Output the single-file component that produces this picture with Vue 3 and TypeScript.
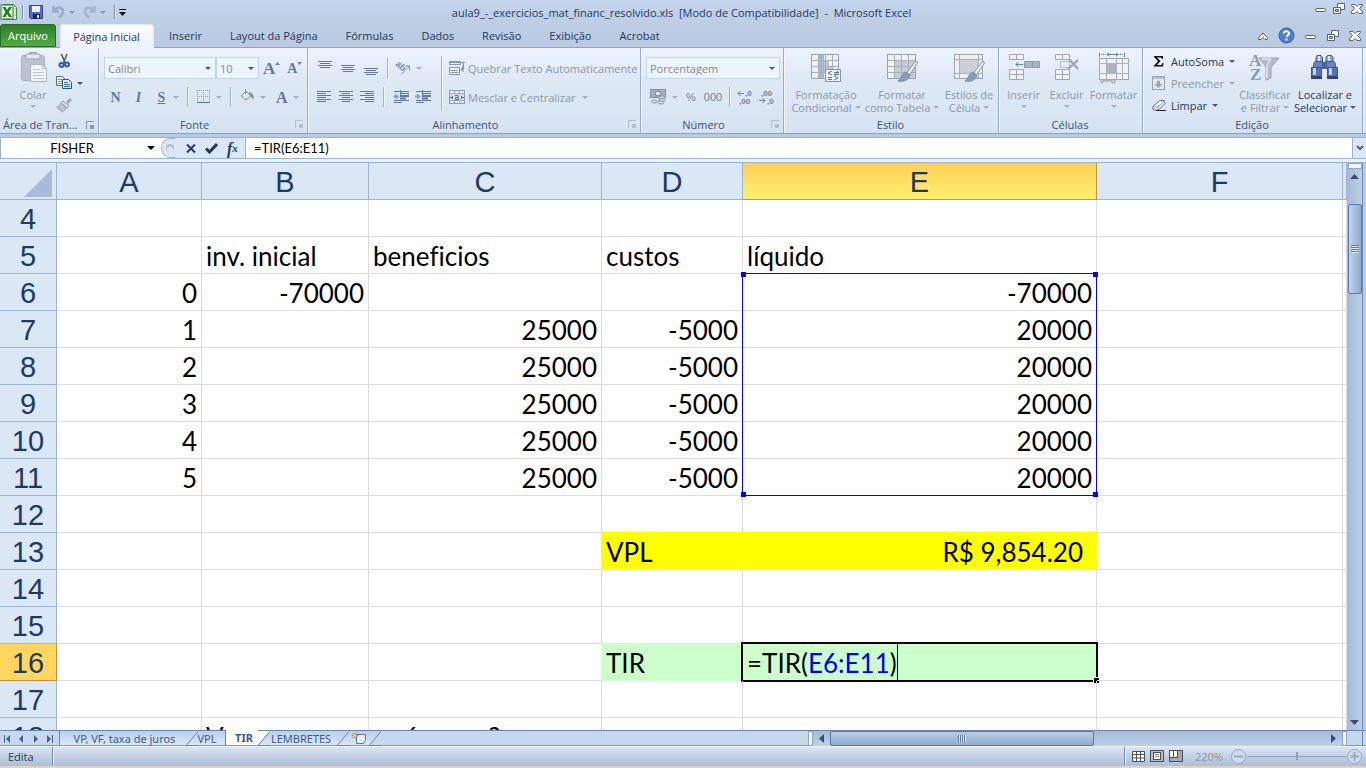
<script setup lang="ts">
import { ref } from 'vue'

type Cell = { t: string; a?: 'r' | 'l'; k?: string }
type Row = { n: number; cells: Record<string, Cell> }

const cols = ['A', 'B', 'C', 'D', 'E', 'F', '']
const ribbonTabs = ['Inserir', 'Layout da Página', 'Fórmulas', 'Dados', 'Revisão', 'Exibição', 'Acrobat']

const num = (t: string): Cell => ({ t, a: 'r' })
const txt = (t: string): Cell => ({ t, a: 'l' })

const flow = (n: number, year: string): Row => ({
  n,
  cells: { A: num(year), C: num('25000'), D: num('-5000'), E: num('20000') },
})

const rows: Row[] = [
  { n: 4, cells: {} },
  { n: 5, cells: { B: txt('inv. inicial'), C: txt('beneficios'), D: txt('custos'), E: txt('líquido') } },
  { n: 6, cells: { A: num('0'), B: num('-70000'), E: { t: '-70000', a: 'r', k: 'range' } } },
  flow(7, '1'),
  flow(8, '2'),
  flow(9, '3'),
  flow(10, '4'),
  flow(11, '5'),
  { n: 12, cells: {} },
  { n: 13, cells: { D: { t: 'VPL', a: 'l', k: 'yellow' }, E: { t: 'R$ 9,854.20', a: 'r', k: 'yellow money' } } },
  { n: 14, cells: {} },
  { n: 15, cells: {} },
  { n: 16, cells: { D: { t: 'TIR', a: 'l', k: 'green' }, E: { t: '', a: 'l', k: 'green editing' } } },
  { n: 17, cells: {} },
  { n: 18, cells: { B: { t: 'Vamos usar nos números?', a: 'l', k: 'spill' } } },
]

const nameBox = ref('FISHER')
const formula = ref('=TIR(E6:E11)')
const fontName = ref('Calibri')
const fontSize = ref('10')
const numberFormat = ref('Porcentagem')
const zoom = ref(50)
const alignTop = [2, 6, 9]
</script>

<template>
  <div class="window">
    <header class="titlebar">
      <div class="quick">
        <svg class="logo" width="18" height="18" viewBox="0 0 18 18">
          <path d="M3.500 1.500h10l3 3v12h-13z" fill="#fff" stroke="#3c8a3e" />
          <path d="M13 6h3M13 9h3M13 12h3" stroke="#7db77e" />
          <rect x="1" y="2" width="12" height="14" fill="#e3f1dc" stroke="#2f7d32" />
          <path d="M2.500 4h3L7 7l2-3h3L8.700 9l3.300 5H9l-2-3-1.500 3h-3L5.500 9z" fill="#1f7a2a" />
        </svg>
        <i class="qsep"></i>
        <button aria-label="Salvar">
          <svg width="14" height="14" viewBox="0 0 14 14">
            <path d="M.5.5h13v13h-12l-1-1z" fill="#5b67c9" stroke="#363f9b" />
            <rect x="3" y="1" width="8" height="6" fill="#eef2fb" />
            <rect x="4" y="9" width="7" height="5" fill="#20264f" />
            <rect x="8" y="10" width="2" height="3" fill="#e6eaf6" />
          </svg>
        </button>
        <button class="undo" aria-label="Desfazer">
          <svg width="13" height="14" viewBox="0 0 13 14">
            <path d="M1.500 1v5.500H7M2 6C4.500 2 10.500 1.500 11 6c.2 3-1.500 4.500-4 6.500" fill="none" stroke="#98abc7" stroke-width="2.500" />
          </svg>
          <i class="caret soft"></i>
        </button>
        <button class="redo" aria-label="Refazer">
          <svg width="13" height="14" viewBox="0 0 13 14">
            <path d="M11.500 1v5.500H6M11 6C8.500 2 2.500 1.500 2 6c-.2 3 1.500 4.500 4 6.500" fill="none" stroke="#a3b5cf" stroke-width="2.500" />
          </svg>
          <i class="caret soft"></i>
        </button>
        <i class="qsep"></i>
        <button class="customize" aria-label="Personalizar">
          <svg width="7" height="7" viewBox="0 0 7 7"><path d="M0 3h7L3.500 7z" fill="#111" /><path d="M0 .5h7" stroke="#111" /></svg>
        </button>
      </div>
      <h1>aula9_-_exercicios_mat_financ_resolvido.xls&nbsp; [Modo de Compatibilidade]&nbsp; -&nbsp; Microsoft Excel</h1>
      <div class="winbtns">
        <button aria-label="Minimizar"><svg width="12" height="12" viewBox="0 0 12 12"><rect x=".5" y="5.500" width="10" height="3" rx="1" fill="#fff" stroke="#5a6375" /></svg></button>
        <button aria-label="Restaurar"><svg width="12" height="12" viewBox="0 0 12 12"><g fill="#fff" stroke="#5a6375"><path d="M4.500.5h7v6h-7z" /><path d="M.5 4.500h7v6h-7z" /><path d="M2.500 6.500h3v2h-3z" fill="#b9cae2" /></g></svg></button>
        <button aria-label="Fechar"><svg width="12" height="12" viewBox="0 0 12 12"><path d="M.5 1.500h3.500l2 2 2-2h3.500v1L8.500 5.500l3 3v2H8l-2-2-2 2H.5v-2l3-3-3-3z" fill="#fff" stroke="#5a6375" /></svg></button>
      </div>
    </header>

    <nav class="tabs">
      <button class="file">Arquivo</button>
      <button class="tab active">Página Inicial</button>
      <button v-for="t in ribbonTabs" :key="t" class="tab">{{ t }}</button>
      <div class="docbtns">
        <button aria-label="Minimizar a Faixa de Opções"><svg width="10" height="10" viewBox="0 0 10 10"><path d="M.8 6.500 5 2l4.200 4.500v2H7L5 6.500 3 8.500H.8z" fill="#fff" stroke="#4d576c" /></svg></button>
        <button class="help" aria-label="Ajuda">
          <svg width="17" height="17" viewBox="0 0 17 17"><circle cx="8.500" cy="8.500" r="7.500" fill="#4a80d2" stroke="#2c5fae" /><path d="M5.800 6.500C6 3.500 11 3.500 11 6.300c0 2-2.400 2-2.400 4" fill="none" stroke="#fff" stroke-width="2" /><rect x="7.500" y="11.500" width="2" height="2" fill="#fff" /></svg>
        </button>
        <button aria-label="Minimizar janela"><svg width="12" height="12" viewBox="0 0 12 12"><rect x=".5" y="5.500" width="10" height="3" rx="1" fill="#fff" stroke="#5a6375" /></svg></button>
        <button aria-label="Restaurar janela"><svg width="12" height="12" viewBox="0 0 12 12"><g fill="#fff" stroke="#5a6375"><path d="M4.500.5h7v6h-7z" /><path d="M.5 4.500h7v6h-7z" /><path d="M2.500 6.500h3v2h-3z" fill="#b9cae2" /></g></svg></button>
        <button aria-label="Fechar janela"><svg width="12" height="12" viewBox="0 0 12 12"><path d="M.5 1.500h3.500l2 2 2-2h3.500v1L8.500 5.500l3 3v2H8l-2-2-2 2H.5v-2l3-3-3-3z" fill="#fff" stroke="#5a6375" /></svg></button>
      </div>
    </nav>

    <section class="ribbon">
      <div class="group g-clip">
        <div class="body">
          <button class="big off">
            <svg width="32" height="32" viewBox="0 0 32 32">
              <rect x="4.500" y="3.500" width="23" height="25" rx="2" fill="#bcc3cd" stroke="#a6afbc" />
              <rect x="9" y="2" width="14" height="5" rx="1" fill="#e3e8ee" stroke="#98a2b2" />
              <path d="M13 2a3 2 0 0 1 6 0" fill="none" stroke="#98a2b2" stroke-width="2" />
              <path d="M13.500 12.500h12l4 4v13h-16z" fill="#f3f6fa" stroke="#aab4c4" />
              <path d="M25.500 12.500v4h4M16 17.500h7M16 20.500h11M16 23.500h11M16 26.500h11" fill="none" stroke="#b9c3d2" />
            </svg>
            <span>Colar</span><i class="caret"></i>
          </button>
          <div class="stack">
            <button aria-label="Recortar">
              <svg width="16" height="16" viewBox="0 0 16 16"><path d="M5.500 1l3.500 9M11 1 7.500 10" stroke="#4c5569" stroke-width="1.500" /><g fill="none" stroke="#2f5fae" stroke-width="2"><circle cx="5.500" cy="12" r="2" /><circle cx="11" cy="11.500" r="2" /></g></svg>
            </button>
            <button aria-label="Copiar">
              <svg width="16" height="16" viewBox="0 0 16 16"><path d="M.5 1.500h6l2 2v7h-8z" fill="#fff" stroke="#4a6ca8" /><path d="M2 4.500h4M2 6.500h4M2 8.500h4" stroke="#7595cf" /><path d="M6.500 4.500h6l3 3v6h-9z" fill="#e6eefb" stroke="#2d509a" /><path d="M8 7.500h4M8 9.500h6M8 11.500h6" stroke="#3e69bb" /></svg>
              <i class="caret dark"></i>
            </button>
            <button aria-label="Pincel de Formatação">
              <svg width="16" height="16" viewBox="0 0 16 16"><path d="M10 5l4-4 2 2-4 4z" fill="#9aa3b1" /><path d="M7 4l6 5-2 2-6-5z" fill="#d8dce3" stroke="#9ba4b2" /><path d="M5 6l5.500 5-4 4L.5 10c2 0 3.500-1.500 4.500-4z" fill="#b4bbc6" stroke="#9da5b2" /><path d="M4 9l4 4" stroke="#e1e5ea" /></svg>
            </button>
          </div>
        </div>
        <footer><span>Área de Tran...</span><button class="launch live" aria-label="Mais opções"></button></footer>
      </div>

      <div class="group g-font">
        <div class="body col">
          <div class="line">
            <label class="combo w-font"><select v-model="fontName" aria-label="Fonte"><option>Calibri</option></select><i class="caret dark"></i></label>
            <label class="combo w-size"><select v-model="fontSize" aria-label="Tamanho da fonte"><option>10</option></select><i class="caret dark"></i></label>
            <button class="ser grow1" aria-label="Aumentar fonte"><b>A</b><svg width="5" height="3" viewBox="0 0 5 3"><path d="M0 3h5L2.500 0z" fill="#6d82a8" /></svg></button>
            <button class="ser grow2" aria-label="Reduzir fonte"><b>A</b><svg width="5" height="3" viewBox="0 0 5 3"><path d="M0 0h5L2.500 3z" fill="#6d82a8" /></svg></button>
          </div>
          <div class="line">
            <button class="ser c23"><b>N</b></button>
            <button class="ser c23"><b><em>I</em></b></button>
            <button class="ser c23"><b><u>S</u></b></button>
            <i class="caret"></i>
            <i class="sep"></i>
            <button class="pair" aria-label="Bordas"><svg width="15" height="14" viewBox="0 0 15 14"><path d="M1.500 0v12M7.500 0v12M13.500 0v12M1 .5h13M1 6.500h13" stroke="#8b9bb8" stroke-dasharray="1 1" /><path d="M1 12.500h13" stroke="#5a6f97" /></svg><i class="caret"></i></button>
            <i class="sep"></i>
            <button class="pair" aria-label="Cor de preenchimento"><svg width="16" height="16" viewBox="0 0 16 16"><path d="M2 7l5-5 5 5-5 4z" fill="#e7ebf2" stroke="#7e8ca8" /><path d="M6.500 0v5" stroke="#7e8ca8" /><path d="M10 3c4 1 5.500 4 4.500 8-1-2-2-3-4-4z" fill="#7d93bb" /><rect x="0" y="12" width="15" height="3" fill="#e4e2dc" /></svg><i class="caret"></i></button>
            <button class="pair ser fontcolor" aria-label="Cor da fonte"><b>A</b><i class="caret"></i></button>
          </div>
        </div>
        <footer><span>Fonte</span><button class="launch" aria-label="Mais opções"></button></footer>
      </div>

      <div class="group g-align">
        <div class="body">
          <div class="col">
            <div class="line">
              <button v-for="y in alignTop" :key="y" class="c23" aria-label="Alinhar vertical"><svg width="14" height="18" viewBox="0 0 14 18"><path :d="`M0 ${y}.5h14M2 ${y + 2}.5h10M0 ${y + 4}.5h14M2 ${y + 6}.5h10`" stroke="#60779f" /></svg></button>
              <i class="sep"></i>
              <button class="pair" aria-label="Orientação"><svg width="17" height="16" viewBox="0 0 17 16"><text x="1" y="7" transform="rotate(42 4 6)" font-family="Liberation Sans" font-size="9" font-weight="bold" fill="#7b8cab">ab</text><path d="M7 14.500 15 6.500M11 6h4.500v4.500" fill="none" stroke="#7b8cab" /></svg><i class="caret"></i></button>
            </div>
            <div class="line">
              <button class="c23" aria-label="Esquerda"><svg width="14" height="14" viewBox="0 0 14 14"><path d="M0 1.500h14M0 3.500h9M0 5.500h14M0 7.500h9M0 9.500h14M0 11.500h9" stroke="#60779f" /></svg></button>
              <button class="c23" aria-label="Centro"><svg width="14" height="14" viewBox="0 0 14 14"><path d="M0 1.500h14M3 3.500h8M0 5.500h14M3 7.500h8M0 9.500h14M3 11.500h8" stroke="#60779f" /></svg></button>
              <button class="c23" aria-label="Direita"><svg width="14" height="14" viewBox="0 0 14 14"><path d="M0 1.500h14M5 3.500h9M0 5.500h14M5 7.500h9M0 9.500h14M5 11.500h9" stroke="#60779f" /></svg></button>
              <i class="sep"></i>
              <button class="c23" aria-label="Diminuir recuo"><svg width="16" height="14" viewBox="0 0 16 14"><path d="M1 1.500h15M7 3.500h9M1 10.500h15M1 12.500h8" stroke="#60779f" /><path d="M7 6h9M7 8.500h6" stroke="#60779f" stroke-width="2" /><path d="M0 6.500l4-3v2h2v2H4v2z" fill="#8da0c0" /><path d="M7.500 0v14" stroke="#60779f" stroke-dasharray="1 1" /></svg></button>
              <button class="c23" aria-label="Aumentar recuo"><svg width="16" height="14" viewBox="0 0 16 14"><path d="M1 1.500h15M7 3.500h9M1 10.500h15M1 12.500h8" stroke="#60779f" /><path d="M7 6h9M7 8.500h6" stroke="#60779f" stroke-width="2" /><path d="M6 6.500l-4-3v2H0v2h2v2z" fill="#8da0c0" /><path d="M7.500 0v14" stroke="#60779f" stroke-dasharray="1 1" /></svg></button>
            </div>
          </div>
          <i class="sep tall"></i>
          <div class="col start">
            <button class="line text off"><svg width="16" height="16" viewBox="0 0 16 16"><path d="M.5 1.500h11v3H.5zM.5 7.500h10v7H.5z" fill="#eef2f8" stroke="#8694ae" /><path d="M0 2.500h16M2 10.500h7M2 12.500h7" stroke="#8694ae" /><path d="M14.500 3v6h-2M12 9.500l2-2v4z" fill="#8694ae" stroke="#8694ae" /></svg><span>Quebrar Texto Automaticamente</span></button>
            <button class="line text off"><svg width="16" height="16" viewBox="0 0 16 16"><rect x=".5" y="1.500" width="15" height="13" fill="#e9eef5" stroke="#8f9bb1" /><path d="M0 4.500h16M0 11.500h16M5.500 1v3M10.500 1v3M5.500 12v3M10.500 12v3" stroke="#9fabc0" /><rect x="1" y="5" width="14" height="6" fill="#d5dde9" /><path d="M1 8.500h3M12 8.500h3M3.500 7v3M12.500 7v3" stroke="#5d6c88" /><path d="M6 6.500h3v4M9 8.500H6.500v2H10" fill="none" stroke="#5d6c88" /></svg><span>Mesclar e Centralizar</span><i class="caret"></i></button>
          </div>
        </div>
        <footer><span>Alinhamento</span><button class="launch" aria-label="Mais opções"></button></footer>
      </div>

      <div class="group g-num">
        <div class="body col">
          <div class="line">
            <label class="combo w-num"><select v-model="numberFormat" aria-label="Formato de número"><option>Porcentagem</option></select><i class="caret dark"></i></label>
          </div>
          <div class="line numrow">
            <button class="pair" aria-label="Moeda"><svg width="17" height="16" viewBox="0 0 17 16"><rect x=".5" y=".5" width="15" height="8" fill="#a5afbf" stroke="#8590a5" /><ellipse cx="8" cy="4.500" rx="3" ry="2.500" fill="#dfe4ec" stroke="#75819a" /><g fill="#d8dde6" stroke="#8b95a8"><ellipse cx="12" cy="8.500" rx="3" ry="1.500" /><ellipse cx="12" cy="11" rx="3" ry="1.500" /><ellipse cx="11" cy="13.500" rx="3" ry="1.500" /><ellipse cx="4.500" cy="12.500" rx="3" ry="1.500" /></g></svg><i class="caret"></i></button>
            <button class="pct">%</button>
            <button class="pct">000</button>
            <i class="sep"></i>
            <button class="dec" aria-label="Aumentar casas decimais"><svg width="16" height="16" viewBox="0 0 16 16"><text x="8" y="7" font-family="Liberation Sans" font-size="8" font-weight="bold" fill="#71809d">,0</text><text x="2" y="15" font-family="Liberation Sans" font-size="8" font-weight="bold" fill="#71809d">,00</text><path d="M1 4.500h6M3.500 2 1 4.500 3.500 7" fill="none" stroke="#71809d" /></svg></button>
            <button class="dec" aria-label="Diminuir casas decimais"><svg width="16" height="16" viewBox="0 0 16 16"><text x="2" y="7" font-family="Liberation Sans" font-size="8" font-weight="bold" fill="#71809d">,00</text><text x="8" y="15" font-family="Liberation Sans" font-size="8" font-weight="bold" fill="#71809d">,0</text><path d="M0 11.500h6M3.500 9 6 11.500 3.500 14" fill="none" stroke="#71809d" /></svg></button>
          </div>
        </div>
        <footer><span>Número</span><button class="launch" aria-label="Mais opções"></button></footer>
      </div>

      <div class="group g-style">
        <div class="body">
          <button class="big off w76">
            <svg width="32" height="32" viewBox="0 0 32 32"><rect x="1.500" y="2.500" width="27" height="24" fill="#f0f0ee" stroke="#98a2b2" /><path d="M8 3h6v23H8z" fill="#a9b6ca" /><path d="M14 9h5v6h-5zM14 15h8v6h-8z" fill="#b8c3d4" /><path d="M8.500 3v23M15.500 3v23M22.500 3v23M2 8.500h26M2 14.500h26M2 20.500h26" stroke="#a8b0bd" /><rect x="15.500" y="17.500" width="15" height="12" fill="#eef3fa" stroke="#8493b0" /><path d="M22 19l-4 2 4 2M18 25.500h4M18 27.500h4M24 20.500h5M24 22.500h5M28 18.500l-3 5M24 24l4 2-4 2" fill="none" stroke="#5d7199" /></svg>
            <span>Formatação<br />Condicional<i class="caret"></i></span>
          </button>
          <button class="big off w76">
            <svg width="32" height="32" viewBox="0 0 32 32"><rect x="1.500" y="2.500" width="28" height="24" fill="#f0f0ee" stroke="#98a2b2" /><path d="M9 9h20v17H9z" fill="#c4ccd9" /><path d="M8.500 3v23M15.500 3v23M22.500 3v23M2 8.500h27M2 14.500h27M2 20.500h27" stroke="#a8b0bd" /><path d="M30 9l1.500 2-8 12-3-2z" fill="#eceef1" stroke="#8d97a8" /><path d="M20 20l4 3c-1 5-6 7-12 6 3-1 3-7 8-9z" fill="#8d9cb6" stroke="#7a8aa6" /></svg>
            <span>Formatar<br />como Tabela<i class="caret"></i></span>
          </button>
          <button class="big off w58">
            <svg width="32" height="32" viewBox="0 0 32 32"><rect x="1.500" y="2.500" width="28" height="24" fill="#f0f0ee" stroke="#98a2b2" /><path d="M6.500 3v23M25.500 3v23M2 7.500h27M2 21.500h27" stroke="#a8b0bd" /><path d="M7 8h18v13H7z" fill="#c8d0dc" /><path d="M30 9l1.500 2-8 12-3-2z" fill="#eceef1" stroke="#8d97a8" /><path d="M20 20l4 3c-1 5-6 7-12 6 3-1 3-7 8-9z" fill="#8d9cb6" stroke="#7a8aa6" /></svg>
            <span>Estilos de<br />Célula<i class="caret"></i></span>
          </button>
        </div>
        <footer><span>Estilo</span></footer>
      </div>

      <div class="group g-cells">
        <div class="body">
          <button class="big off w43">
            <svg width="32" height="32" viewBox="0 0 32 32"><g fill="#f2f2f0" stroke="#a0a8b5"><path d="M1.500 2.500h14v5h-14zM1.500 17.500h14v10h-14z" /><path d="M8.500 2.500v5M8.500 17.500v10M1.500 22.500h14" /></g><path d="M16.500 9.500h15v6h-15z" fill="#aab5c5" stroke="#8e9aad" /><path d="M24.500 9.500v6" stroke="#8e9aad" /><path d="M8 12.500h7M10.500 10 8 12.500l2.500 2.500" fill="none" stroke="#71809d" /></svg>
            <span>Inserir</span><i class="caret"></i>
          </button>
          <button class="big off w43">
            <svg width="32" height="32" viewBox="0 0 32 32"><g fill="#f2f2f0" stroke="#a0a8b5"><path d="M4.500 2.500h14v5h-14zM4.500 17.500h14v10h-14z" /><path d="M11.500 2.500v5M11.500 17.500v10M4.500 22.500h14" /></g><path d="M9.500 9.500h9v6h-9z" fill="none" stroke="#8091b5" stroke-dasharray="1 1" /><path d="M18 7l9 10M27 8l-10 9" stroke="#98a2b2" stroke-width="2" /></svg>
            <span>Excluir</span><i class="caret"></i>
          </button>
          <button class="big off w51">
            <svg width="32" height="32" viewBox="0 0 32 32"><rect x="1.500" y="6.500" width="29" height="21" fill="#f2f2f0" stroke="#a0a8b5" /><path d="M8.500 6v22M18.500 6v22M24.500 6v22M1 11.500h30M1 21.500h30" stroke="#a8b0bd" /><path d="M9 11h10v11H9z" fill="#aab5c5" /><path d="M3 28h14v3h-3v-2H5v2H3z" fill="#dfe4ec" stroke="#a0a8b5" /><path d="M1.500 1v4M26.500 1v4" stroke="#71809d" /><path d="M3 2.500h6M20 2.500h6" stroke="#71809d" stroke-dasharray="1 1" /><path d="M9 2.500h11M11 1 9 2.500 11 4M18 1l2 1.500L18 4" fill="none" stroke="#71809d" /></svg>
            <span>Formatar</span><i class="caret"></i>
          </button>
        </div>
        <footer><span>Células</span></footer>
      </div>

      <div class="group g-edit">
        <div class="body">
          <div class="stack wide">
            <button><svg width="14" height="16" viewBox="0 0 14 16"><path d="M2 3h9v3h-1L9 4.500H5L8.500 8 5 12h4.500L10.500 10h1L11 13.500H2V12.500L6 8.300 2 4z" fill="#111" /></svg><span>AutoSoma</span><i class="caret dark"></i></button>
            <button class="off"><svg width="14" height="16" viewBox="0 0 14 16"><rect x=".5" y="1.500" width="12" height="13" fill="#e3e8ef" stroke="#98a2b2" /><path d="M1 2h11v2H1z" fill="#b9c1cd" /><path d="M5 6h3v3h2.500L6.500 13 2.500 9H5z" fill="#94a1b6" /></svg><span>Preencher</span><i class="caret"></i></button>
            <button><svg width="14" height="16" viewBox="0 0 14 16"><path d="M.5 10 7.500 3.500H12l1 3-6.500 6.500H1.500z" fill="#f4f7fc" stroke="#5a6b90" /><path d="M1 10h5l7-6.500M6 10v3" fill="none" stroke="#8b9ab8" /><path d="M4 13.500h10" stroke="#222" /></svg><span>Limpar</span><i class="caret dark"></i></button>
          </div>
          <button class="big off w60">
            <svg width="32" height="32" viewBox="0 0 32 32"><text x="0" y="14" font-family="Liberation Serif" font-size="17" font-weight="bold" fill="#8b99b3">A</text><text x="1" y="28" font-family="Liberation Serif" font-size="17" font-weight="bold" fill="#8b99b3">Z</text><path d="M10 6h20l-8 9v11l-5 2V15z" fill="#b4bcc8" stroke="#98a2b2" /><path d="M13 7h8l-3 8v11" fill="none" stroke="#d9dee6" stroke-width="2" /></svg>
            <span>Classificar<br />e Filtrar<i class="caret"></i></span>
          </button>
          <button class="big w60">
            <svg width="32" height="32" viewBox="0 0 32 32"><g stroke="#3f568a"><path d="M8 3.500h4l1.500 2V10H7V5.500zM18.500 3.500h4l1.500 2V10h-7V5.500z" fill="#8ea6d6" /><path d="M6 9.500h8V16H4l1-5zM17 9.500h8l1 1.500 1 5H17z" fill="#6a85c0" /><path d="M2.500 15.500h10v11h-10zM18.500 15.500h10v11h-10z" fill="#5671b0" /></g><path d="M13 10h5v7h-5z" fill="#4a62a0" /><path d="M4 16h3v7H4zM20 16h3v7h-3z" fill="#c5d3ee" /><path d="M9 4h2v5H9zM19 4h2v5h-2z" fill="#dbe5f6" /><path d="M2 24h11v3H2zM18 24h11v3H18z" fill="#32457a" /></svg>
            <span>Localizar e<br />Selecionar<i class="caret dark"></i></span>
          </button>
        </div>
        <footer><span>Edição</span></footer>
      </div>
    </section>

    <section class="formulabar">
      <div class="namebox"><input v-model="nameBox" aria-label="Caixa de nome" /><i class="caret black"></i></div>
      <div class="fxbtns">
        <svg width="14" height="20" viewBox="0 0 14 20"><path d="M14 .5H9A8.500 9.500 0 0 0 9 19.500h5" fill="#dbe7f5" stroke="#9db3d2" /><circle cx="9" cy="10" r="4" fill="#a9bdda" /><circle cx="9" cy="11.500" r="3" fill="#dce7f5" /></svg>
        <button class="cancel" aria-label="Cancelar"><svg width="10" height="9" viewBox="0 0 10 9"><path d="M1 .5l8 8M9 .5l-8 8" stroke="#22375f" stroke-width="2" /></svg></button>
        <button aria-label="Inserir"><svg width="13" height="11" viewBox="0 0 13 11"><path d="M1 5.500 4.500 9 12 1" fill="none" stroke="#22375f" stroke-width="3" /></svg></button>
        <button class="fx" aria-label="Inserir função"><em>f</em><em class="x">x</em></button>
      </div>
      <input v-model="formula" class="formula" aria-label="Barra de fórmulas" />
      <button class="expand" aria-label="Expandir"><svg width="8" height="6" viewBox="0 0 8 6"><path d="M1 1l3 3 3-3" fill="none" stroke="#5a626e" stroke-width="2" /></svg></button>
    </section>

    <main class="work">
      <div class="sheet">
        <table>
          <colgroup><col class="k0" /><col class="kA" /><col class="kB" /><col class="kC" /><col class="kD" /><col class="kE" /><col class="kF" /><col /></colgroup>
          <thead>
            <tr>
              <th class="corner"><svg width="28" height="28" viewBox="0 0 28 28"><path d="M28 0v28H0z" fill="#a9bbd8" /></svg></th>
              <th v-for="c in cols" :key="c" :class="{ sel: c === 'E' }">{{ c }}</th>
            </tr>
          </thead>
          <tbody>
            <tr v-for="r in rows" :key="r.n">
              <th :class="{ sel: r.n === 16 }">{{ r.n }}</th>
              <td v-for="c in cols" :key="c" :class="[r.cells[c]?.a, r.cells[c]?.k]">
                <template v-if="r.n === 16 && c === 'E'"><div class="editor">=TIR(<span>E6:E11</span>)<i></i></div></template>
                <template v-else>{{ r.cells[c]?.t }}</template>
                <div v-if="r.n === 6 && c === 'E'" class="marquee"><i></i><i></i><i></i><i></i></div>
              </td>
            </tr>
          </tbody>
        </table>
      </div>
      <div class="vscroll">
        <i class="vsplit"></i>
        <button aria-label="Rolar para cima"><svg width="9" height="5" viewBox="0 0 9 5"><path d="M0 5h9L4.500 0z" fill="#3d4a72" /></svg></button>
        <div class="vthumb"><i></i></div>
        <button class="down" aria-label="Rolar para baixo"><svg width="9" height="5" viewBox="0 0 9 5"><path d="M0 0h9L4.500 5z" fill="#3d4a72" /></svg></button>
      </div>
    </main>

    <div class="sheetbar">
      <div class="navs">
        <button aria-label="Primeira"><svg width="7" height="8" viewBox="0 0 7 8"><path d="M0 0h1v8H0zM6 0v8L2 4z" fill="#44608f" /></svg></button>
        <button aria-label="Anterior"><svg width="7" height="8" viewBox="0 0 7 8"><path d="M5 0v8L1 4z" fill="#44608f" /></svg></button>
        <button aria-label="Próxima"><svg width="7" height="8" viewBox="0 0 7 8"><path d="M2 0v8l4-4z" fill="#44608f" /></svg></button>
        <button aria-label="Última"><svg width="7" height="8" viewBox="0 0 7 8"><path d="M6 0h1v8H6zM1 0v8l4-4z" fill="#44608f" /></svg></button>
      </div>
      <button class="st s1">VP, VF, taxa de juros</button>
      <svg class="slant" width="12" height="15" viewBox="0 0 12 15"><path d="M0 14.500 12 .5M0 14.500h12" stroke="#6b86ae" /></svg>
      <button class="st s2">VPL</button>
      <button class="st s3">TIR</button>
      <svg class="slant" width="12" height="15" viewBox="0 0 12 15"><path d="M0 0h12L0 14z" fill="#fff" /><path d="M0 14.500 12 .5M0 14.500h12" stroke="#6b86ae" /></svg>
      <button class="st s4">LEMBRETES</button>
      <svg class="slant" width="12" height="15" viewBox="0 0 12 15"><path d="M0 14.500 12 .5M0 14.500h12" stroke="#6b86ae" /></svg>
      <button class="st s5" aria-label="Inserir planilha"><svg width="16" height="14" viewBox="0 0 16 14"><path d="M5.500 3.500h9v6l-2 3h-7z" fill="#e6edf8" stroke="#5e77a6" /><path d="M4 1v7M.5 4.500h7M1.500 2l5 5M6.500 2l-5 5" stroke="#e08a1e" /><circle cx="4" cy="4.500" r="1" fill="#fff3c4" /></svg></button>
      <svg class="slant" width="12" height="15" viewBox="0 0 12 15"><path d="M12 1v14H0z" fill="#c6d8ee" /><path d="M0 14.500 12 .5M0 14.500h12" stroke="#6b86ae" /></svg>
      <div class="blank"></div>
      <i class="hsplit"></i>
      <div class="hscroll">
        <button aria-label="Rolar para a esquerda"><svg width="5" height="9" viewBox="0 0 5 9"><path d="M5 0v9L0 4.500z" fill="#3d4a72" /></svg></button>
        <div class="hthumb"><i></i></div>
        <span></span>
        <button aria-label="Rolar para a direita"><svg width="5" height="9" viewBox="0 0 5 9"><path d="M0 0v9l5-4.500z" fill="#3d4a72" /></svg></button>
      </div>
      <i class="hsplit"></i>
      <div class="cornerbox"></div>
    </div>

    <footer class="status">
      <span class="mode">Edita</span><i class="ssep"></i>
      <span class="fill"></span>
      <i class="ssep"></i>
      <div class="views">
        <button aria-label="Normal"><svg width="13" height="11" viewBox="0 0 13 11"><path d="M.5.500h12v10H.5zM4.500 0v11M8.500 0v11M0 3.500h13M0 7h13" fill="#fff" stroke="#4b5058" /></svg></button>
        <button aria-label="Layout da Página"><svg width="14" height="12" viewBox="0 0 14 12"><rect x=".5" y=".5" width="13" height="11" fill="#b9bdc3" stroke="#4b5058" /><rect x="3.500" y="2.500" width="7" height="7" fill="#fff" stroke="#4b5058" /><path d="M5 4.500h4M5 6.500h4" stroke="#888" /></svg></button>
        <button aria-label="Quebra de Página"><svg width="14" height="12" viewBox="0 0 14 12"><rect x=".5" y=".5" width="13" height="11" fill="#a5a9af" stroke="#4b5058" /><path d="M1 1h3v6H1zM5 1h3v6H5z" fill="#fff" /><path d="M4.500 1v6.500M8.500 1v6.500M1 7.500h8" stroke="#4b5058" /></svg></button>
      </div>
      <span class="pctz">220%</span>
      <div class="zoomer">
        <button aria-label="Menos zoom"><svg width="17" height="17" viewBox="0 0 17 17"><circle cx="8.500" cy="8.500" r="7" fill="#cfdced" stroke="#94a9c7" /><path d="M4 8.500h9" stroke="#94a9c7" stroke-width="2" /></svg></button>
        <input v-model="zoom" type="range" min="0" max="100" aria-label="Zoom" />
        <button aria-label="Mais zoom"><svg width="17" height="17" viewBox="0 0 17 17"><circle cx="8.500" cy="8.500" r="7" fill="#cfdced" stroke="#94a9c7" /><path d="M4 8.500h9M8.500 4v9" stroke="#94a9c7" stroke-width="2" /></svg></button>
      </div>
    </footer>
  </div>
</template>

<style>
html,
body {
  background: #d9d5cc;
}
</style>

<style scoped>
* {
  box-sizing: border-box;
}
.window {
  display: flex;
  flex-direction: column;
  height: calc(100vh - 2px);
  overflow: hidden;
  background: #b5cbe6;
  font-family: 'Open Sans', 'Noto Sans', sans-serif;
  font-size: 11px;
  line-height: 13px;
  color: #1e395b;
}
button {
  display: flex;
  align-items: center;
  justify-content: center;
  padding: 0;
  border: 0;
  background: none;
  font: inherit;
  color: inherit;
  white-space: nowrap;
}
svg {
  display: block;
  flex: none;
}
input,
select {
  min-width: 0;
  border: 0;
  border-radius: 0;
  outline: 0;
  font: inherit;
  color: inherit;
  background: none;
}
.caret {
  flex: none;
  display: inline-block;
  width: 0;
  height: 0;
  border: 3px solid transparent;
  border-top-color: #a5adb9;
  border-bottom-width: 0;
}
.caret.dark {
  border-top-color: #4c5668;
}
.caret.black {
  border-width: 4px;
  border-bottom-width: 0;
  border-top-color: #000;
}
.caret.soft {
  border-top-color: #8297b8;
}

.titlebar {
  display: flex;
  flex: none;
  height: 24px;
  align-items: center;
  background: linear-gradient(#c3d5ec, #bccde4);
}
.quick {
  display: flex;
  align-items: center;
  flex: 1 1 0;
  height: 22px;
}
.quick button {
  gap: 4px;
}
.qsep {
  width: 1px;
  height: 14px;
  margin: 0 6px 0 4px;
  background: #7f8ca3;
  box-shadow: 1px 0 0 #e3ecf8;
}
.undo {
  margin-left: 9px;
}
.redo {
  margin: 0 4px 0 8px;
}
.customize {
  margin-left: -2px;
}
h1 {
  margin: 0;
  font-size: 11px;
  font-weight: 400;
  white-space: nowrap;
}
.winbtns {
  display: flex;
  flex: 1 1 0;
  justify-content: flex-end;
  gap: 6px;
  height: 18px;
  align-self: flex-start;
  padding-right: 3px;
}

.tabs {
  display: flex;
  flex: none;
  height: 24px;
  background: linear-gradient(#bccde4, #b9cae2);
  border-bottom: 1px solid #8ba3c7;
}
.file {
  width: 56px;
  height: 23px;
  border: 1px solid #256b22;
  border-radius: 3px 3px 0 0;
  background: linear-gradient(#2f7f2a, #3f9438 50%, #56ab44);
  color: #fff;
}
.tab {
  padding: 0 14px;
}
.tab.active {
  width: 94px;
  height: 24px;
  margin: 0 1px 0 4px;
  padding: 0 1px 0 0;
  border: 1px solid #dbe6f5;
  border-bottom: 0;
  border-radius: 3px 3px 0 0;
  background: linear-gradient(#fafcff, #ecf3fc);
}
.docbtns {
  display: flex;
  flex: 1;
  align-items: center;
  justify-content: flex-end;
  gap: 10px;
  padding-right: 5px;
}

.ribbon {
  display: flex;
  flex: none;
  height: 86px;
  border-bottom: 1px solid #8ba0bd;
  background: linear-gradient(#ecf3fd, #dfe9f6 35%, #dae6f4 70%, #d5e2f1);
}
.group {
  display: flex;
  flex-direction: column;
  flex: none;
  border-right: 1px solid #98acca;
  box-shadow: 1px 0 0 #f4f8fd;
}
.g-clip { width: 99px; }
.g-font { width: 209px; }
.g-align { width: 333px; }
.g-num { width: 143px; }
.g-style { width: 215px; }
.g-cells { width: 144px; }
.g-edit { width: 220px; }
.body {
  display: flex;
  flex: 1;
}
.group > footer {
  display: flex;
  align-items: center;
  height: 18px;
  padding: 0 4px 0 3px;
  color: #3c5377;
}
.group > footer span {
  flex: 1;
  text-align: center;
  white-space: nowrap;
}
.g-clip > footer span {
  text-align: left;
}
.launch {
  width: 8px;
  height: 8px;
  margin-left: 8px;
  border: solid #b4bfce;
  border-width: 1px 0 0 1px;
  background: linear-gradient(#b4bfce, #b4bfce) 100% 100% / 4px 4px no-repeat;
}
.launch.live {
  margin-left: 0;
  border-color: #8b99ae;
  background: linear-gradient(#8b99ae, #8b99ae) 100% 100% / 4px 4px no-repeat;
}
.big {
  flex-direction: column;
  justify-content: flex-start;
  padding-top: 4px;
  white-space: normal;
}
.big svg {
  margin-bottom: 4px;
}
.big span {
  white-space: nowrap;
}
.big > .caret {
  margin-top: 4px;
}
.big span .caret {
  margin: 0 0 3px 3px;
}
.off {
  color: #8d96a5;
}
.g-clip .big {
  width: 54px;
  margin-left: 6px;
}
.stack {
  display: flex;
  flex-direction: column;
  padding-top: 2px;
}
.stack button {
  height: 22px;
  justify-content: flex-start;
  gap: 5px;
}
.g-clip .stack {
  margin-left: -4px;
}
.col {
  display: flex;
  flex-direction: column;
  gap: 7px;
  padding-top: 9px;
}
.start {
  align-items: flex-start;
}
.line {
  display: flex;
  align-items: center;
  height: 22px;
}
.g-font .body,
.g-num .body {
  padding-left: 5px;
}
.combo {
  display: grid;
  align-items: center;
  height: 22px;
  border: 1px solid #c3d4ea;
  background: #ecf4fc;
  color: #838b97;
}
.combo > * {
  grid-area: 1 / 1;
}
.combo select {
  width: 100%;
  height: 20px;
  padding: 0 3px;
  appearance: none;
}
.combo .caret {
  justify-self: end;
  margin-right: 4px;
}
.w-font { width: 112px; }
.w-size { width: 43px; }
.w-num { width: 134px; }
.ser {
  font-family: 'Liberation Serif', serif;
  font-size: 14px;
  color: #63779d;
}
.grow1 {
  margin-left: 4px;
  font-size: 17px;
}
.grow2 {
  margin-left: 7px;
  font-size: 14px;
}
.ser svg {
  align-self: flex-start;
}
.c23 {
  width: 23px;
}
.sep {
  flex: none;
  width: 1px;
  height: 20px;
  margin: 0 8px;
  background: #a0b2ce;
  box-shadow: 1px 0 0 #f1f6fd;
}
.sep.tall {
  height: 54px;
  margin: 8px 7px 0;
}
.pair {
  gap: 5px;
}
.fontcolor {
  margin-left: 10px;
  font-size: 16px;
}
.g-align .body {
  padding-left: 5px;
}
.g-align .body > .col:first-child {
  width: 121px;
}
.g-align .sep:not(.tall) {
  margin: 0 6px 0 5px;
}
.text {
  gap: 3px;
}
.text .caret {
  margin-left: 3px;
}
.numrow {
  padding-left: 4px;
}
.numrow .sep {
  margin: 0 7px;
}
.pct {
  margin-left: 8px;
  font-family: 'Liberation Sans', sans-serif;
  font-size: 11px;
  color: #71809d;
}
.dec {
  margin-right: 6px;
}
.g-style .body {
  padding-left: 4px;
}
.w76 { width: 76px; }
.w58 { width: 58px; }
.w43 { width: 43px; }
.w51 { width: 51px; }
.w60 { width: 60px; }
.g-cells .body {
  padding-left: 3px;
}
.wide {
  width: 83px;
  margin-left: 9px;
}

.formulabar {
  display: flex;
  flex: none;
  height: 22px;
  margin-top: 3px;
  border: 1px solid #9db3d2;
  border-width: 1px 0 1px 1px;
  background: #fff;
  color: #000;
  font-family: Lato, 'Open Sans', sans-serif;
  font-size: 13px;
}
.namebox {
  display: flex;
  align-items: center;
  width: 160px;
  padding-right: 6px;
}
.namebox input {
  flex: 1;
  padding: 0 4px 0 0;
  text-align: center;
}
.fxbtns {
  display: flex;
  align-items: center;
  gap: 9px;
  width: 85px;
  border-right: 1px solid #9db3d2;
  background: linear-gradient(90deg, #fff 14px, #dbe7f5 14px);
}
.cancel {
  margin-left: 2px;
}
.fx {
  font-family: 'Liberation Serif', serif;
  font-size: 16px;
  font-weight: 700;
  color: #22375f;
}
.fx .x {
  align-self: flex-end;
  font-size: 11px;
}
.formula {
  flex: 1;
  padding: 0 8px;
}
.expand {
  width: 14px;
  border-left: 1px solid #9db3d2;
  background: #dbe7f5;
}

.work {
  display: flex;
  flex: 1;
  min-height: 0;
  margin-top: 3px;
  border-top: 1px solid #9db3d2;
  padding-right: 3px;
  box-shadow: 0 -3px 0 #eaf1fa;
}
.sheet {
  flex: 1;
  min-width: 0;
  overflow: hidden;
  background: #fff;
}
table {
  width: 100%;
  table-layout: fixed;
  border-collapse: separate;
  border-spacing: 0;
}
.k0 { width: 57px; }
.kA { width: 145px; }
.kB { width: 167px; }
.kC { width: 233px; }
.kD { width: 141px; }
.kE { width: 354px; }
.kF { width: 246px; }
th {
  height: 37px;
  padding: 2px 0 0;
  border: solid #9fb3d1;
  border-width: 0 1px 1px 0;
  background: #dae7f5;
  font-family: 'Liberation Sans', Arial, sans-serif;
  font-size: 29px;
  line-height: 34px;
  font-weight: 400;
  color: #1f3864;
}
th.sel {
  border-color: #c0913a;
  background: #ffd75e;
}
thead th.sel {
  background: linear-gradient(#ffcf57, #fff06f);
}
.corner svg {
  margin: 2px 0 0 24px;
}
td {
  position: relative;
  height: 37px;
  padding: 2px 4px 0;
  border: solid #dadcdd;
  border-width: 0 1px 1px 0;
  font-family: Lato, 'Open Sans', sans-serif;
  font-size: 26px;
  font-variant-ligatures: none;
  line-height: 34px;
  color: #000;
  white-space: nowrap;
}
td.r {
  text-align: right;
}
td.yellow {
  border-color: #ff0;
  background: #ff0;
  box-shadow: 0 -1px 0 #ff0, -1px 0 0 #ff0, -1px -1px 0 #ff0;
}
td.money {
  padding-right: 13px;
}
td.green {
  border-color: #cfc;
  background: #cfc;
  box-shadow: 0 -1px 0 #cfc, -1px 0 0 #cfc, -1px -1px 0 #cfc;
}
td.spill {
  z-index: 1;
}
td.range {
  z-index: 2;
}
.marquee {
  position: absolute;
  top: -1px;
  left: -1px;
  width: calc(100% + 2px);
  height: calc(600% + 7px);
  border: 1px solid #00f;
}
.marquee i {
  position: absolute;
  width: 5px;
  height: 5px;
  background: #00f;
}
.marquee i:nth-child(1) { top: -2px; left: -2px; }
.marquee i:nth-child(2) { top: -2px; right: -2px; }
.marquee i:nth-child(3) { bottom: -2px; left: -2px; }
.marquee i:nth-child(4) { bottom: -2px; right: -2px; }
.editor {
  position: absolute;
  top: -2px;
  left: -2px;
  display: flex;
  width: calc(100% + 4px);
  height: 40px;
  padding-left: 4px;
  border: 2px solid #160018;
  line-height: 38px;
}
.editor span {
  color: #00f;
}
.editor i {
  width: 1px;
  background: #000;
}
.editor::after {
  content: '';
  position: absolute;
  right: -3px;
  bottom: -3px;
  width: 5px;
  height: 5px;
  border: solid #cfc;
  border-width: 1px 0 0 1px;
  background: #000;
}
.vscroll {
  display: flex;
  flex-direction: column;
  align-items: center;
  width: 16px;
  border-right: 1px solid #6d8cb6;
  background: linear-gradient(90deg, #a3bad6, #bcd0e8);
}
.vsplit {
  width: 14px;
  height: 6px;
  border: 1px solid #8ea6c8;
  background: #f4f8fd;
}
.vscroll button {
  height: 15px;
}
.vthumb {
  display: flex;
  align-items: center;
  justify-content: center;
  width: 14px;
  height: 90px;
  margin-top: 20px;
  border: 1px solid #567aa8;
  border-radius: 2px;
  background: linear-gradient(90deg, #c0d3ea, #91accd);
}
.vthumb i {
  width: 8px;
  height: 8px;
  background: repeating-linear-gradient(#60779c 0 1px, #dfe9f5 1px 2px);
}
.vscroll .down {
  margin-top: auto;
}

.sheetbar {
  display: flex;
  flex: none;
  height: 16px;
  padding-right: 3px;
  border-top: 1px solid #6b86ae;
  background: #c6d8ee;
  box-shadow: inset 0 -1px 0 #7f9bc2;
  font-family: 'Noto Sans', 'Open Sans', sans-serif;
  font-size: 11px;
  color: #3d5a8a;
}
.navs {
  display: flex;
  align-items: center;
  justify-content: space-between;
  width: 60px;
  padding: 0 6px 0 4px;
  border-right: 1px solid #6b86ae;
}
.st {
  height: 15px;
  border-bottom: 1px solid #7f9bc2;
  background: linear-gradient(#b9cfeb, #dbe7f6);
}
.slant {
  background: linear-gradient(#b9cfeb, #dbe7f6);
}
.s1 {
  width: 126px;
  padding-left: 3px;
}
.s2 {
  width: 27px;
  padding-right: 9px;
}
.s3 {
  width: 33px;
  margin-top: -1px;
  height: 16px;
  padding-left: 4px;
  border-left: 1px solid #6b86ae;
  background: #fff;
  font-weight: 700;
}
.s4 {
  width: 67px;
  padding-right: 5px;
}
.s5 { width: 20px; }
.blank {
  flex: 1;
}
.hsplit {
  width: 5px;
  height: 15px;
  border: 1px solid #8ea6c8;
  background: #f4f8fd;
}
.hscroll {
  display: flex;
  align-items: center;
  flex: 0 0 529px;
  height: 15px;
  padding: 0 6px;
  background: linear-gradient(#a3bad6, #bcd0e8);
}
.hthumb {
  display: flex;
  align-items: center;
  justify-content: center;
  width: 264px;
  height: 15px;
  margin-left: 6px;
  border: 1px solid #567aa8;
  border-radius: 2px;
  background: linear-gradient(#b9cde6, #91accd);
}
.hthumb i {
  width: 8px;
  height: 7px;
  background: repeating-linear-gradient(90deg, #60779c 0 1px, #dfe9f5 1px 2px);
}
.hscroll span {
  flex: 1;
}
.cornerbox {
  width: 16px;
  border-right: 1px solid #6d8cb6;
}

.status {
  display: flex;
  align-items: center;
  flex: none;
  height: 20px;
  padding-bottom: 1px;
  background: linear-gradient(#dbe6f4, #c3d2e5 45%, #aebfd5);
  border-top: 1px solid #eef4fb;
}
.mode {
  width: 52px;
  padding-left: 8px;
}
.ssep {
  width: 1px;
  height: 18px;
  background: #7389a9;
  box-shadow: 1px 0 0 #e9f0f9;
}
.fill {
  flex: 1;
}
.views {
  display: flex;
  align-items: center;
  gap: 5px;
  padding: 0 12px 0 7px;
}
.pctz {
  width: 35px;
  color: #8d96a5;
}
.zoomer {
  display: flex;
  align-items: center;
  padding-right: 3px;
}
.zoomer input {
  width: 99px;
  height: 10px;
  margin: 0;
  appearance: none;
  background: linear-gradient(#8ca0bf, #8ca0bf) center / 100% 1px no-repeat;
}
.zoomer input::-webkit-slider-thumb {
  appearance: none;
  width: 2px;
  height: 8px;
  background: #8ca0bf;
}
</style>
